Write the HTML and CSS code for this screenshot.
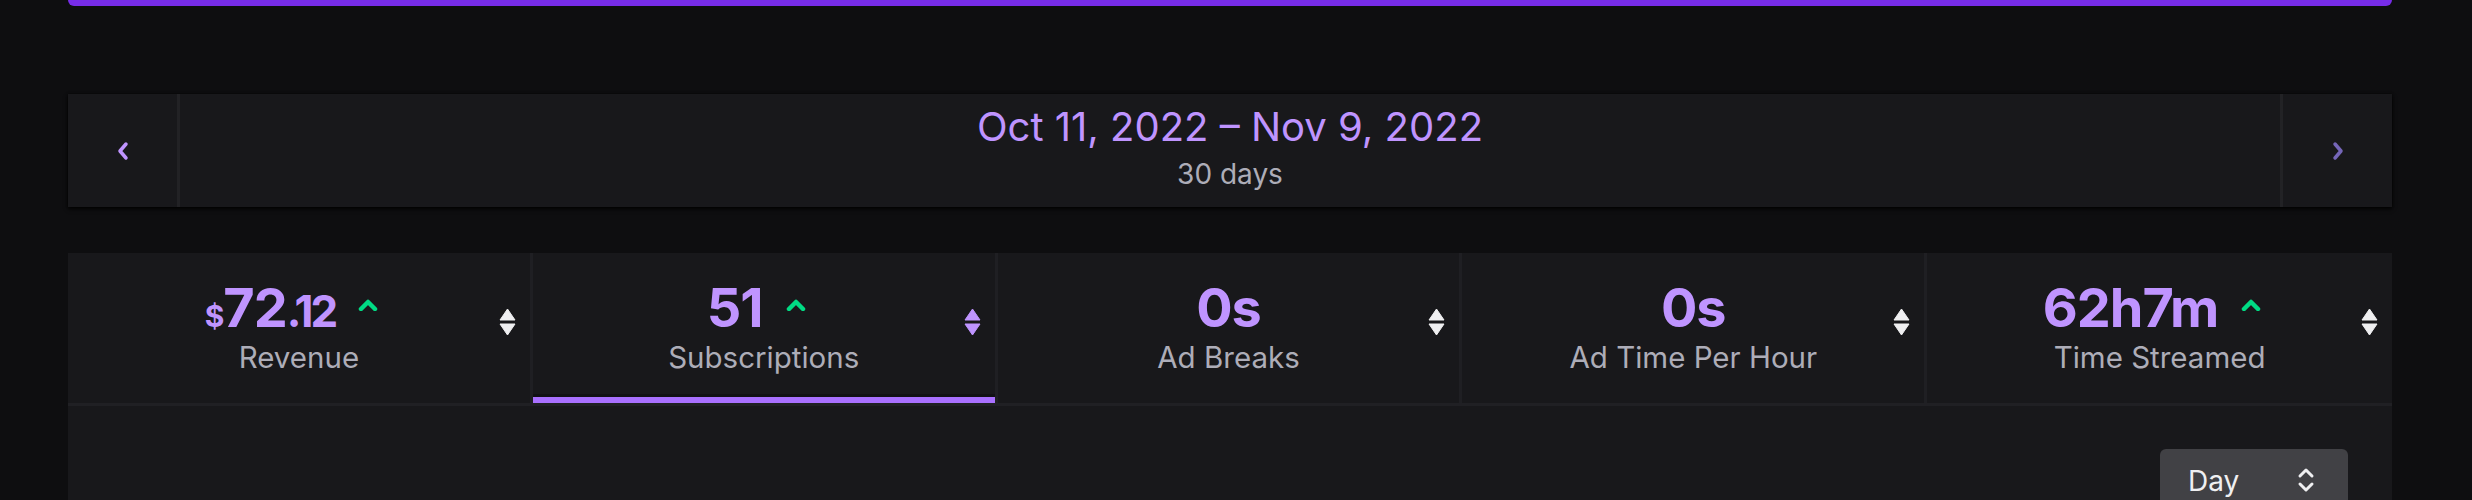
FILE: index.html
```html
<!DOCTYPE html>
<html lang="en">
<head>
<meta charset="utf-8">
<title>Channel Analytics</title>
<link rel="stylesheet" href="styles.css">
</head>
<body>
<div class="page">
  <div class="banner"></div>

  <div class="datebar">
    <button class="nav-btn nav-prev" aria-label="Previous">
      <svg width="14" height="20" viewBox="0 0 14 20"><path d="M10 3 L4 10 L10 17" fill="none" stroke="#bf94ff" stroke-width="3.5" stroke-linecap="round" stroke-linejoin="round"/></svg>
    </button>
    <div class="range">
      <div class="range-title">Oct 11, 2022 – Nov 9, 2022</div>
      <div class="range-sub">30 days</div>
    </div>
    <button class="nav-btn nav-next" aria-label="Next">
      <svg width="14" height="20" viewBox="0 0 14 20"><path d="M4 3 L10 10 L4 17" fill="none" stroke="#7566b8" stroke-width="3.5" stroke-linecap="round" stroke-linejoin="round"/></svg>
    </button>
  </div>

  <div class="stats">
    <div class="tabs">
      <div class="tab">
        <span class="tab-spacer"></span>
        <div class="tab-body">
          <div class="value-row">
            <span class="value"><span class="cur">$</span>72<span class="cents">.12</span></span>
            <svg class="trend" width="20" height="12" viewBox="0 0 20 12"><path d="M3 10 L10 3 L17 10" fill="none" stroke="#00db84" stroke-width="4.5" stroke-linecap="round" stroke-linejoin="round"/></svg>
          </div>
          <div class="label">Revenue</div>
        </div>
        <svg class="sort" width="17" height="28" viewBox="0 0 17 28"><path d="M8.5 1 L16 12 L1 12 Z M1 16 L16 16 L8.5 27 Z" fill="#efeff1" stroke="#efeff1" stroke-width="1" stroke-linejoin="round"/></svg>
      </div>
      <div class="tab tab-active">
        <span class="tab-spacer"></span>
        <div class="tab-body">
          <div class="value-row">
            <span class="value">51</span>
            <svg class="trend" width="20" height="12" viewBox="0 0 20 12"><path d="M3 10 L10 3 L17 10" fill="none" stroke="#00db84" stroke-width="4.5" stroke-linecap="round" stroke-linejoin="round"/></svg>
          </div>
          <div class="label">Subscriptions</div>
        </div>
        <svg class="sort" width="17" height="28" viewBox="0 0 17 28"><path d="M8.5 1 L16 12 L1 12 Z M1 16 L16 16 L8.5 27 Z" fill="#bf94ff" stroke="#bf94ff" stroke-width="1" stroke-linejoin="round"/></svg>
      </div>
      <div class="tab">
        <span class="tab-spacer"></span>
        <div class="tab-body">
          <div class="value-row">
            <span class="value">0s</span>
          </div>
          <div class="label">Ad Breaks</div>
        </div>
        <svg class="sort" width="17" height="28" viewBox="0 0 17 28"><path d="M8.5 1 L16 12 L1 12 Z M1 16 L16 16 L8.5 27 Z" fill="#efeff1" stroke="#efeff1" stroke-width="1" stroke-linejoin="round"/></svg>
      </div>
      <div class="tab">
        <span class="tab-spacer"></span>
        <div class="tab-body">
          <div class="value-row">
            <span class="value">0s</span>
          </div>
          <div class="label">Ad Time Per Hour</div>
        </div>
        <svg class="sort" width="17" height="28" viewBox="0 0 17 28"><path d="M8.5 1 L16 12 L1 12 Z M1 16 L16 16 L8.5 27 Z" fill="#efeff1" stroke="#efeff1" stroke-width="1" stroke-linejoin="round"/></svg>
      </div>
      <div class="tab">
        <span class="tab-spacer"></span>
        <div class="tab-body">
          <div class="value-row">
            <span class="value">62h7m</span>
            <svg class="trend" width="20" height="12" viewBox="0 0 20 12"><path d="M3 10 L10 3 L17 10" fill="none" stroke="#00db84" stroke-width="4.5" stroke-linecap="round" stroke-linejoin="round"/></svg>
          </div>
          <div class="label">Time Streamed</div>
        </div>
        <svg class="sort" width="17" height="28" viewBox="0 0 17 28"><path d="M8.5 1 L16 12 L1 12 Z M1 16 L16 16 L8.5 27 Z" fill="#efeff1" stroke="#efeff1" stroke-width="1" stroke-linejoin="round"/></svg>
      </div>
    </div>

    <div class="chart">
      <div class="chart-toolbar">
        <button class="select">
          <span class="select-text">Day</span>
          <svg width="20" height="30" viewBox="0 0 20 30"><path d="M4 11 L10 5 L16 11 M4 19 L10 25 L16 19" fill="none" stroke="#efeff1" stroke-width="3" stroke-linecap="round" stroke-linejoin="round"/></svg>
        </button>
      </div>
    </div>
  </div>
</div>
</body>
</html>
```

FILE: styles.css
```css
* { box-sizing: border-box; }

html, body {
  margin: 0;
  padding: 0;
  background: #0e0e10;
  height: 500px;
  overflow: hidden;
}

body {
  font-family: Inter, "Noto Sans", "Liberation Sans", sans-serif;
  color: #efeff1;
}

.page {
  padding: 0 80px 0 68px;
}

.banner {
  height: 6px;
  background: #772ce8;
  border-radius: 0 0 6px 6px;
}

.datebar {
  margin-top: 88px;
  height: 113px;
  display: flex;
  background: #18181b;
  box-shadow: 0 2px 4px rgba(0, 0, 0, 0.9), 0 0 2px rgba(0, 0, 0, 0.6);
}

.nav-btn {
  width: 112px;
  border: 0;
  padding: 0;
  background: #18181b;
  display: flex;
  align-items: center;
  justify-content: center;
  cursor: pointer;
}

.nav-prev { border-right: 3px solid #222225; }
.nav-next { border-left: 3px solid #222225; }

.range {
  flex: 1;
  display: flex;
  flex-direction: column;
  align-items: center;
  justify-content: center;
  gap: 7px;
  padding-bottom: 6px;
}

.range-title {
  font-size: 40px;
  line-height: 1.2;
  color: #bf94ff;
}

.range-sub {
  font-size: 28px;
  line-height: 1.2;
  color: #adadb8;
}

.stats {
  margin-top: 46px;
  background: #18181b;
  height: 247px;
  overflow: hidden;
}

.tabs {
  display: grid;
  grid-template-columns: repeat(5, 1fr);
  height: 153px;
  border-bottom: 3px solid #202024;
}

.tab {
  display: grid;
  grid-template-columns: 17px 1fr 17px;
  align-items: center;
  padding: 0 14px;
  border-right: 3px solid #1f1f23;
}

.tab:last-child { border-right: 0; }

.tab-active {
  box-shadow: inset 0 -6px 0 #a970ff, inset 0 -9px 0 #111114;
}

.tab-body {
  display: flex;
  flex-direction: column;
  align-items: center;
  gap: 5px;
}

.value-row {
  display: flex;
  align-items: flex-start;
}

.value {
  font-size: 54px;
  line-height: 1;
  font-weight: 700;
  color: #bf94ff;
  letter-spacing: -1px;
}

.cur { font-size: 30px; }
.cents { font-size: 44px; letter-spacing: -3px; }

.trend {
  margin: 18px 15px 0 23px;
}

.label {
  font-size: 29.5px;
  line-height: 1.2;
  color: #adadb8;
}

.sort {
  margin-bottom: 12px;
}

.chart {
  padding: 43px 44px 0 0;
}

.chart-toolbar {
  display: flex;
  justify-content: flex-end;
}

.select {
  width: 188px;
  height: 64px;
  border: 0;
  border-radius: 6px;
  background: #414145;
  display: flex;
  align-items: flex-start;
  justify-content: space-between;
  padding: 16px 32px 0 28px;
  font-family: inherit;
  cursor: pointer;
}

.select-text {
  font-size: 28px;
  line-height: 1.2;
  color: #efeff1;
}
```
